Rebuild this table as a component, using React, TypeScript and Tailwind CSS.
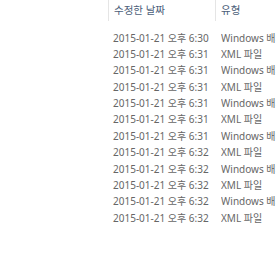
const rows = [
  ['2015-01-21 오후 6:30', 'Windows 배치 파일'],
  ['2015-01-21 오후 6:31', 'XML 파일'],
  ['2015-01-21 오후 6:31', 'Windows 배치 파일'],
  ['2015-01-21 오후 6:31', 'XML 파일'],
  ['2015-01-21 오후 6:31', 'Windows 배치 파일'],
  ['2015-01-21 오후 6:31', 'XML 파일'],
  ['2015-01-21 오후 6:31', 'Windows 배치 파일'],
  ['2015-01-21 오후 6:32', 'XML 파일'],
  ['2015-01-21 오후 6:32', 'Windows 배치 파일'],
  ['2015-01-21 오후 6:32', 'XML 파일'],
  ['2015-01-21 오후 6:32', 'Windows 배치 파일'],
  ['2015-01-21 오후 6:32', 'XML 파일'],
];

export default function App() {
  return (
    <div
      className="w-[276px] h-[260px] bg-white overflow-hidden text-[10px] text-[#666666]"
      style={{ fontFamily: '"Noto Sans", "Noto Sans CJK KR", sans-serif' }}
    >
      {/* header */}
      <div className="flex h-[24px] pl-[108px]">
        <div className="w-[107px] h-[21px] border-l border-[#e5e5e5] pl-[5px] flex items-center text-[#4c607a] text-[10.5px] whitespace-nowrap">
          수정한 날짜
        </div>
        <div className="flex-1 h-[21px] border-l border-[#e5e5e5] pl-[5px] flex items-center text-[#4c607a] text-[10.5px] whitespace-nowrap">
          유형
        </div>
      </div>
      {/* rows */}
      <div className="pt-[6px]">
        {rows.map((r, i) => (
          <div key={i} className="flex h-[16.36px] items-center pl-[113px] whitespace-nowrap">
            <div className="w-[108px]">{r[0]}</div>
            <div className="flex-1 overflow-hidden">{r[1]}</div>
          </div>
        ))}
      </div>
    </div>
  );
}
